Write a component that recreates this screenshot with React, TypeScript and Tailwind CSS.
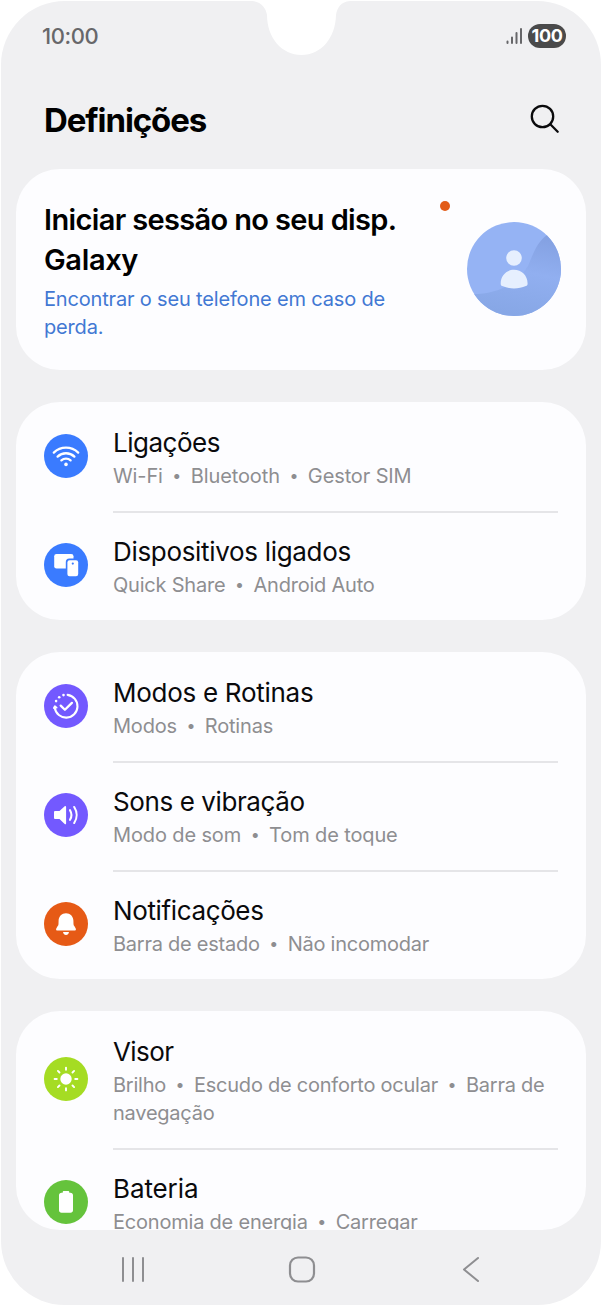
import { Fragment, JSX, ReactNode } from "react";

type SettingItem = {
  title: string;
  titleClass: string;
  details: string[];
  detailClass: string;
  color: string;
  icon: ReactNode;
};

const WifiIcon = (): JSX.Element => (
  <svg viewBox="0 0 44 44" className="size-11" fill="none" stroke="#fff" strokeWidth="2.3" strokeLinecap="round">
    <path d="M9.8 18.6a17.6 17.6 0 0 1 24.4 0" />
    <path d="M13.6 22.6a12.2 12.2 0 0 1 16.8 0" />
    <path d="M17.4 26.4a6.8 6.8 0 0 1 9.2 0" />
    <circle cx="22" cy="30.4" r="1.8" fill="#fff" stroke="none" />
  </svg>
);

const DevicesIcon = (): JSX.Element => (
  <svg viewBox="0 0 44 44" className="size-11">
    <rect x="10.2" y="11" width="19.3" height="14.5" rx="2.3" fill="#fff" />
    <rect x="21.8" y="15.6" width="13.9" height="19.2" rx="3.5" fill="#3a7bff" />
    <rect x="23.4" y="17.2" width="10.8" height="16" rx="2.2" fill="#fff" />
    <circle cx="28.8" cy="20.6" r="1.1" fill="#3a7bff" />
  </svg>
);

const RoutinesIcon = (): JSX.Element => (
  <svg viewBox="0 0 44 44" className="size-11" fill="none" stroke="#fff" strokeWidth="2.1" strokeLinecap="round" strokeLinejoin="round">
    <path d="M23.6 10.9a11.4 11.4 0 1 1-12.8 12.9" />
    <path d="M9.9 24l1-1.7 1.7 1.3" strokeWidth="1.8" />
    <path d="M16.7 21.6l4.2 4.2 7-6.9" strokeWidth="2.3" />
    <g fill="#fff" stroke="none">
      <circle cx="19.5" cy="11.1" r="1.3" />
      <circle cx="15.2" cy="13.3" r="1.3" />
      <circle cx="12.1" cy="17.1" r="1.3" />
    </g>
  </svg>
);

const SoundIcon = (): JSX.Element => (
  <svg viewBox="0 0 44 44" className="size-11" fill="none" stroke="#fff" strokeWidth="2.1" strokeLinecap="round">
    <path d="M11.3 18h4.2l5.2-4.7c.6-.5 1.4-.1 1.4.7v16.4c0 .8-.8 1.2-1.4.7L15.5 26h-4.2c-.8 0-1.3-.5-1.3-1.3v-5.4c0-.8.5-1.3 1.3-1.3z" fill="#fff" stroke="none" />
    <path d="M26 17.2a9.2 9.2 0 0 1 0 9.6" />
    <path d="M30.2 14a14.5 14.5 0 0 1 0 16" />
  </svg>
);

const BellIcon = (): JSX.Element => (
  <svg viewBox="0 0 44 44" className="size-11" fill="#fff">
    <path d="M22 11.2c-4.2 0-7.3 3.1-7.4 7.3l-.1 3.4c0 .8-.3 1.5-.8 2.2l-1.3 2.1c-.8 1.2-.1 2.4 1.2 2.4h16.8c1.3 0 2-1.2 1.2-2.4l-1.3-2.1c-.5-.7-.8-1.4-.8-2.2l-.1-3.4c-.1-4.2-3.2-7.3-7.4-7.3z" />
    <path d="M19 30h6c-.3 1.9-1.5 3-3 3s-2.7-1.1-3-3z" />
  </svg>
);

const SunIcon = (): JSX.Element => (
  <svg viewBox="0 0 44 44" className="size-11" fill="none" stroke="#fff" strokeWidth="1.9" strokeLinecap="round">
    <circle cx="22" cy="22" r="5.7" fill="#fff" stroke="none" />
    <path d="M22 10.6v2.2M22 31.2v2.2M10.6 22h2.2M31.2 22h2.2M13.9 13.9l1.6 1.6M28.5 28.5l1.6 1.6M13.9 30.1l1.6-1.6M28.5 15.5l1.6-1.6" />
  </svg>
);

const BatteryIcon = (): JSX.Element => (
  <svg viewBox="0 0 44 44" className="size-11" fill="#fff">
    <path d="M20 11h4c.8 0 1.3.5 1.3 1.3v.5h1.2c1.5 0 2.5 1 2.5 2.5v14.9c0 1.5-1 2.5-2.5 2.5h-9c-1.5 0-2.5-1-2.5-2.5V15.3c0-1.5 1-2.5 2.5-2.5h1.2v-.5c0-.8.5-1.3 1.3-1.3z" />
  </svg>
);

const groups: SettingItem[][] = [
  [
    {
      title: "Ligações",
      titleClass: "tracking-[-0.5px]",
      details: ["Wi-Fi", "Bluetooth", "Gestor SIM"],
      detailClass: "tracking-[-0.12px]",
      color: "bg-[#3a7bff]",
      icon: <WifiIcon />,
    },
    {
      title: "Dispositivos ligados",
      titleClass: "tracking-[-0.32px]",
      details: ["Quick Share", "Android Auto"],
      detailClass: "tracking-[-0.21px]",
      color: "bg-[#3a7bff]",
      icon: <DevicesIcon />,
    },
  ],
  [
    {
      title: "Modos e Rotinas",
      titleClass: "tracking-[-0.28px]",
      details: ["Modos", "Rotinas"],
      detailClass: "tracking-[-0.2px]",
      color: "bg-[#7359ff]",
      icon: <RoutinesIcon />,
    },
    {
      title: "Sons e vibração",
      titleClass: "tracking-[-0.4px]",
      details: ["Modo de som", "Tom de toque"],
      detailClass: "tracking-[-0.13px]",
      color: "bg-[#7359ff]",
      icon: <SoundIcon />,
    },
    {
      title: "Notificações",
      titleClass: "tracking-[-0.37px]",
      details: ["Barra de estado", "Não incomodar"],
      detailClass: "tracking-[-0.25px]",
      color: "bg-[#e65a16]",
      icon: <BellIcon />,
    },
  ],
  [
    {
      title: "Visor",
      titleClass: "tracking-[-0.6px]",
      details: ["Brilho", "Escudo de conforto ocular", "Barra de navegação"],
      detailClass: "tracking-[-0.24px]",
      color: "bg-[#a5dc23]",
      icon: <SunIcon />,
    },
    {
      title: "Bateria",
      titleClass: "tracking-[-0.1px]",
      details: ["Economia de energia", "Carregar"],
      detailClass: "tracking-[-0.21px]",
      color: "bg-[#65c33c]",
      icon: <BatteryIcon />,
    },
  ],
];

const StatusBar = (): JSX.Element => (
  <div className="flex h-[69px] shrink-0 items-center justify-between pr-[35px] pl-[41px]">
    <span className="pt-px text-[22px] font-medium tracking-[-0.4px] text-[#67676a]">10:00</span>
    <div className="flex items-center gap-[5px]">
      <svg viewBox="0 0 17 18" className="h-[18px] w-[17px]" stroke="#67676a" strokeWidth="2" strokeLinecap="round">
        <path d="M1.5 14.5v1.5M6 10.5v5.500M10.500 6v10M15 2v14" />
      </svg>
      <span className="flex h-6 w-[38px] items-center justify-center rounded-full bg-[#4a4a4b] text-[18px] font-bold tracking-[-0.3px] text-white">
        100
      </span>
    </div>
  </div>
);

const AccountCard = (): JSX.Element => (
  <section className="flex h-[201px] shrink-0 rounded-[44px] bg-[#fdfdff] pr-[25px] pl-7">
    <div className="w-[380px] pt-[31px]">
      <h2 className="text-[29px] leading-10 font-semibold text-black">
        <span className="block tracking-[-0.64px] whitespace-nowrap">Iniciar sessão no seu disp.</span>
        <span className="block tracking-[-0.35px]">Galaxy</span>
      </h2>
      <p className="mt-[5px] text-[20px] leading-7 tracking-[-0.17px] text-[#4278d3]">
        <span className="block whitespace-nowrap">Encontrar o seu telefone em caso de</span>
        <span className="block">perda.</span>
      </p>
    </div>
    <div className="flex flex-1 justify-between pt-8 pl-4">
      <span className="size-2.5 shrink-0 rounded-full bg-[#e25c18]" />
      <svg viewBox="0 0 94 94" className="mt-[21px] size-[94px] shrink-0">
        <defs>
          <clipPath id="avatar">
            <circle cx="47" cy="47" r="47" />
          </clipPath>
          <linearGradient id="shade" x1="0.8" y1="0" x2="0.6" y2="1">
            <stop offset="0" stopColor="#829fe0" />
            <stop offset="0.5" stopColor="#91aff0" />
            <stop offset="1" stopColor="#87a7e6" />
          </linearGradient>
        </defs>
        <g clipPath="url(#avatar)">
          <rect width="94" height="94" fill="#95b3f4" />
          <path d="M80 13C70 20 66 32 61 44C50 62 30 72 6 72L12 94H94V10z" fill="url(#shade)" />
        </g>
        <circle cx="47" cy="36" r="7.8" fill="#e6effe" />
        <path d="M33.7 61.5C33.7 53.5 39.5 47.8 47 47.8s13.6 5.7 13.6 13.7c0 1.5-.5 2-1.7 2.6-7.3 3.1-16.5 3.1-23.7 0-1.1-.6-1.5-1.1-1.5-2.6z" fill="#e6effe" />
      </svg>
    </div>
  </section>
);

const SettingRow = ({ item, last }: { item: SettingItem; last: boolean }): JSX.Element => (
  <div className="flex items-center px-7">
    <div className={`mr-[25px] mb-0.5 size-11 shrink-0 rounded-full ${item.color}`}>{item.icon}</div>
    <div className="relative min-w-0 flex-1 pt-[23px] pb-[21px]">
      <h3 className={`text-[26px] leading-9 text-[#0a0a0c] ${item.titleClass}`}>{item.title}</h3>
      <p className={`mt-px text-[20px] leading-7 text-[#8e8e91] ${item.detailClass}`}>
        {item.details.map((detail, i) => (
          <Fragment key={detail}>
            {i > 0 && <span className="inline-block w-7 text-center align-[2px] text-[16px] leading-none">•</span>}
            {detail}
          </Fragment>
        ))}
      </p>
      {!last && <div className="absolute right-0 -bottom-0.5 left-0 h-0.5 bg-[#e5e5e8]" />}
    </div>
  </div>
);

const NavigationBar = (): JSX.Element => (
  <nav className="flex h-[75px] shrink-0 items-center justify-between pt-0.5 pr-[120px] pl-[119px]">
    <svg viewBox="0 0 26 28" className="h-7 w-[26px]" stroke="#8e8e91" strokeWidth="2" strokeLinecap="round">
      <path d="M3 3v23M13 3v23M23 3v23" />
    </svg>
    <svg viewBox="0 0 28 28" className="mr-1 size-7" fill="none" stroke="#8e8e91" strokeWidth="2.2">
      <rect x="2" y="2.5" width="24" height="24" rx="8" />
    </svg>
    <svg viewBox="0 0 20 28" className="h-7 w-5" fill="none" stroke="#8e8e91" strokeWidth="2" strokeLinecap="round" strokeLinejoin="round">
      <path d="M17 3L3 14.5L17 26" />
    </svg>
  </nav>
);

const App = (): JSX.Element => {
  return (
    <div className="h-[1306px] w-[602px] overflow-hidden bg-white px-px pt-px font-['Inter','Liberation_Sans',sans-serif]">
      <main className="relative flex h-[1304px] flex-col overflow-hidden rounded-[64px] bg-[#f0f0f2]">
        <svg viewBox="0 0 98 55" className="absolute -top-px left-[251px] h-[55px] w-[98px]" fill="#fff">
          <path d="M0 0V1C9 1.5 14 8 15 15C15 38 30 55 49.5 55S83.500 38 84 15C85 8 89 1.500 98 1V0z" />
        </svg>
        <StatusBar />
        <header className="flex h-[99px] shrink-0 items-center justify-between pt-px pr-[41px] pl-[43px]">
          <h1 className="text-[33px] leading-10 font-bold tracking-[-1.1px] text-black">Definições</h1>
          <svg viewBox="0 0 30 30" className="mb-0.5 size-[30px]" fill="none" stroke="#0a0a0c" strokeWidth="2.3" strokeLinecap="round">
            <circle cx="12.5" cy="12.5" r="10.7" />
            <path d="M20.3 20.3L27.7 27.7" />
          </svg>
        </header>
        <div className="mx-[15px] flex min-h-0 flex-1 flex-col gap-8 overflow-hidden rounded-b-[44px]">
          <AccountCard />
          {groups.map((items, index) => (
            <section
              key={index}
              className={`shrink-0 bg-[#fdfdff] ${index === groups.length - 1 ? "rounded-t-[44px]" : "rounded-[44px]"}`}
            >
              {items.map((item, i) => (
                <SettingRow key={item.title} item={item} last={i === items.length - 1} />
              ))}
            </section>
          ))}
        </div>
        <NavigationBar />
      </main>
    </div>
  );
};

export default App;
